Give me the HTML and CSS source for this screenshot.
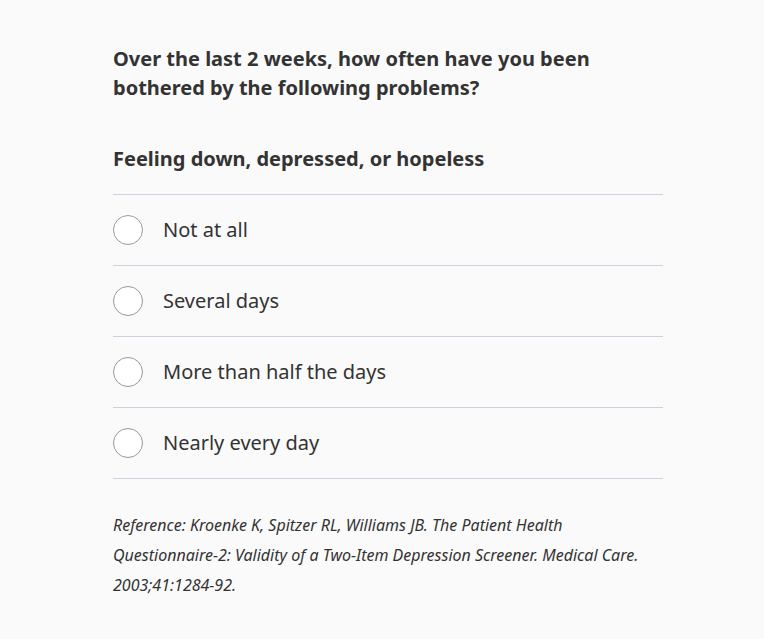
FILE: index.html
```html
<!DOCTYPE html>
<html lang="en">
<head>
    <meta charset="UTF-8">
    <meta name="viewport" content="width=device-width, initial-scale=1.0">
    <title>PHQ-2</title>
    <link rel="stylesheet" href="styles.css">
</head>
<body>
    <div class="container">
        <h1>Over the last 2 weeks, how often have you been bothered by the following problems?</h1>
        <h2>Feeling down, depressed, or hopeless</h2>
        <ul class="options">
            <li><label><span class="radio"></span><span class="option-text">Not at all</span></label></li>
            <li><label><span class="radio"></span><span class="option-text">Several days</span></label></li>
            <li><label><span class="radio"></span><span class="option-text">More than half the days</span></label></li>
            <li><label><span class="radio"></span><span class="option-text">Nearly every day</span></label></li>
        </ul>
        <p class="reference">Reference: Kroenke K, Spitzer RL, Williams JB. The Patient Health Questionnaire-2: Validity of a Two-Item Depression Screener. Medical Care. 2003;41:1284-92.</p>
    </div>
</body>
</html>
```

FILE: styles.css
```css
* {
    margin: 0;
    padding: 0;
    box-sizing: border-box;
}

body {
    background: #fafafa;
    font-family: 'Noto Sans', 'Open Sans', sans-serif;
    color: #333;
}

.container {
    width: 550px;
    margin-left: 113px;
    padding-top: 44px;
}

h1 {
    font-size: 20px;
    font-weight: bold;
    line-height: 29px;
    margin-bottom: 42px;
}

h2 {
    font-size: 20px;
    font-weight: bold;
    line-height: 29px;
    margin-bottom: 21px;
}

.options {
    list-style: none;
    border-top: 1px solid #cfd0e0;
}

.options li {
    border-bottom: 1px solid #cfd0e0;
}

.options label {
    display: flex;
    align-items: center;
    gap: 20px;
    height: 70px;
    font-size: 20px;
    cursor: pointer;
}

.option-text {
    margin-bottom: 2px;
}

.radio {
    width: 30px;
    height: 30px;
    border: 1px solid #999;
    border-radius: 50%;
    background: #fff;
    flex: 0 0 auto;
}

.reference {
    margin-top: 31px;
    font-size: 16px;
    font-style: italic;
    line-height: 30px;
}
```
